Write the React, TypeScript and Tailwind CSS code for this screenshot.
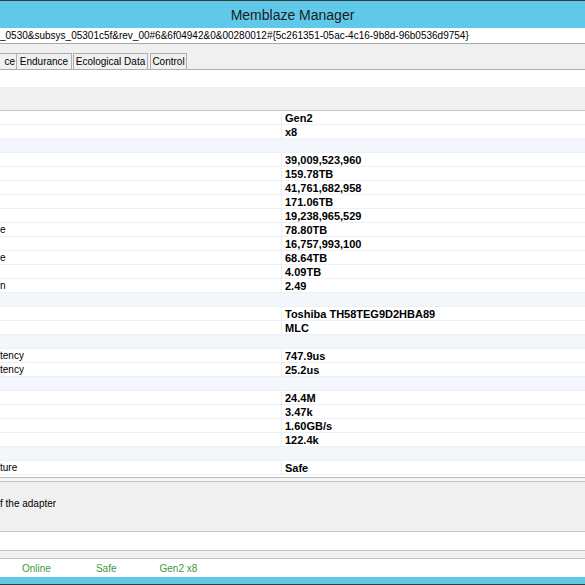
import React from "react";

type Row = { label?: string; value?: string; group?: boolean };

const rows: Row[] = [
  { value: "Gen2" },
  { value: "x8" },
  { group: true },
  { value: "39,009,523,960" },
  { value: "159.78TB" },
  { value: "41,761,682,958" },
  { value: "171.06TB" },
  { value: "19,238,965,529" },
  { label: "e", value: "78.80TB" },
  { value: "16,757,993,100" },
  { label: "e", value: "68.64TB" },
  { value: "4.09TB" },
  { label: "n", value: "2.49" },
  { group: true },
  { value: "Toshiba TH58TEG9D2HBA89" },
  { value: "MLC" },
  { group: true },
  { label: "tency", value: "747.9us" },
  { label: "tency", value: "25.2us" },
  { group: true },
  { value: "24.4M" },
  { value: "3.47k" },
  { value: "1.60GB/s" },
  { value: "122.4k" },
  { group: true },
  { label: "ture", value: "Safe" },
];

export default function App() {
  return (
    <div
      className="w-[585px] h-[585px] overflow-hidden bg-white flex flex-col text-black"
      style={{ fontFamily: '"Liberation Sans", Arial, sans-serif' }}
    >
      {/* title bar */}
      <div className="h-[28px] shrink-0 border-t border-[#3a3a3a] bg-[#60c9ea] flex items-center justify-center">
        <span className="text-[14px] leading-none text-[#1b1b1b] pt-[1px]">Memblaze Manager</span>
      </div>

      {/* device path */}
      <div className="h-[16px] shrink-0 bg-white border-b border-[#a9a9a9] flex items-center whitespace-nowrap overflow-hidden">
        <span className="text-[10px] leading-none">
          _0530&amp;subsys_05301c5f&amp;rev_00#6&amp;6f04942&amp;0&amp;00280012#{"{"}5c261351-05ac-4c16-9b8d-96b0536d9754{"}"}
        </span>
      </div>

      {/* tabs */}
      <div className="h-[26px] shrink-0 bg-[#f0f0f0] border-b border-[#adadad] flex items-end">
        <div className="h-[16px] w-[17px] border-t border-r border-[#adadad] flex items-center justify-end pr-[1px] overflow-hidden">
          <span className="text-[10px] leading-none">ce</span>
        </div>
        <div className="h-[16px] w-[55px] border-t border-r border-[#adadad] flex items-center justify-center">
          <span className="text-[10px] leading-none">Endurance</span>
        </div>
        <div className="h-[16px] w-[75px] ml-[1px] border-t border-l border-r border-[#adadad] flex items-center justify-center">
          <span className="text-[10px] leading-none">Ecological Data</span>
        </div>
        <div className="h-[16px] w-[37px] ml-[2px] border-t border-l border-r border-[#adadad] flex items-center justify-center">
          <span className="text-[10px] leading-none">Control</span>
        </div>
      </div>

      {/* tab page top */}
      <div className="h-[17px] shrink-0 bg-white" />
      <div className="h-[24px] shrink-0 bg-[#f0f0f0] border-b border-[#c6c6c6]" />

      {/* property grid */}
      <div className="shrink-0 flex flex-col">
        {rows.map((r, i) =>
          r.group ? (
            <div key={i} className="h-[14px] bg-[#f3f6fa] border-b border-[#edf1f6]" />
          ) : (
            <div key={i} className="h-[14px] flex border-b border-[#edf1f6]">
              <div className="w-[282px] border-r border-[#e9edf3] flex items-center pt-[1px] overflow-hidden whitespace-nowrap">
                <span className="text-[10px] leading-none">{r.label ?? ""}</span>
              </div>
              <div className="flex-1 flex items-center pl-[3px] pt-[1px] whitespace-nowrap">
                <span className="text-[11px] leading-none font-bold">{r.value}</span>
              </div>
            </div>
          )
        )}
      </div>

      {/* description panel */}
      <div className="h-[2px] shrink-0 bg-white" />
      <div className="shrink-0 border-t border-[#b9b9b9] bg-[#f7f7f7] pt-[3px]">
        <div className="h-[51px] border-t border-b border-[#c4c4c4] bg-[#f0f0f0] pt-[16px] whitespace-nowrap">
          <span className="text-[10px] leading-[12px] block">f the adapter</span>
        </div>
      </div>

      <div className="h-[18px] shrink-0 bg-white" />
      <div className="h-[9px] shrink-0 border-t border-b border-[#c2c2c2] bg-[#f0f0f0]" />

      {/* status bar */}
      <div className="h-[18px] shrink-0 bg-white flex items-center pt-[2px] text-[10px] leading-none text-[#3c9a3c]">
        <span className="ml-[22px]">Online</span>
        <span className="ml-[45px]">Safe</span>
        <span className="ml-[43px]">Gen2 x8</span>
      </div>

      {/* bottom frame */}
      <div className="flex-1 bg-[#60c9ea] border-b border-[#3a3a3a]" />
    </div>
  );
}
